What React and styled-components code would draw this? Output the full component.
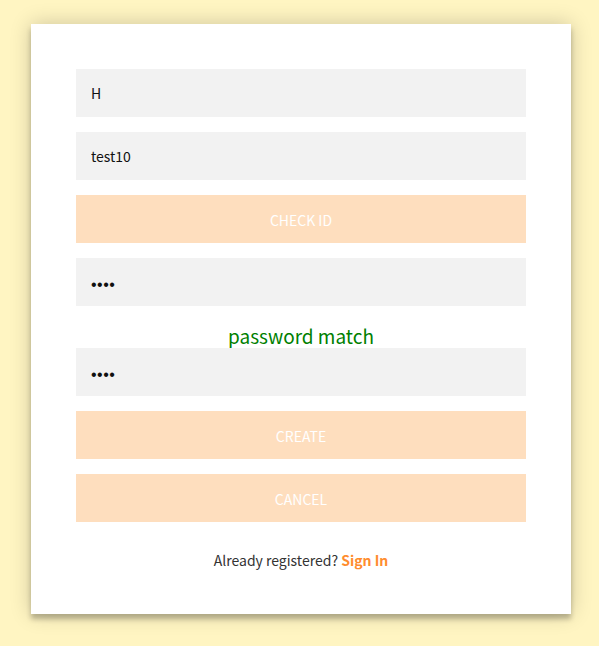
import React from "react";
import styled, { createGlobalStyle } from "styled-components";

const GlobalStyle = createGlobalStyle`
  html, body {
    margin: 0;
    padding: 0;
    background: #fff5c2;
  }
  body {
    font-family: "Noto Sans CJK KR", "Noto Sans", sans-serif;
  }
`;

const App = () => {
  return (
    <Page>
      <GlobalStyle />
      <Form>
        <Input type="text" defaultValue="H" />
        <Input type="text" defaultValue="test10" />
        <Button>check id</Button>
        <Input type="password" defaultValue="1234" />
        <Match>password match</Match>
        <Input type="password" defaultValue="1234" />
        <Button>create</Button>
        <Button>cancel</Button>
        <Message>
          Already registered? <SignIn href="#">Sign In</SignIn>
        </Message>
      </Form>
    </Page>
  );
};

export default App;

const Page = styled.div`
  padding: 24px 0 32px 31px;
`;

const Form = styled.div`
  width: 450px;
  padding: 45px;
  background: #ffffff;
  box-shadow: 0 0 20px 0 rgba(0, 0, 0, 0.2), 0 5px 5px 0 rgba(0, 0, 0, 0.24);
  display: flex;
  flex-direction: column;
`;

const Input = styled.input`
  display: block;
  box-sizing: border-box;
  width: 100%;
  height: 48px;
  margin: 0 0 15px;
  padding: 15px;
  border: 0;
  outline: 0;
  background: #f2f2f2;
  color: #111;
  font-family: "Noto Sans CJK KR", "Noto Sans", sans-serif;
  font-size: 14px;

  &[type="password"] {
    padding: 18px 15px 12px;
    font-family: "Liberation Sans", sans-serif;
    font-size: 16px;
    letter-spacing: 0.5px;
  }
`;

const Button = styled.button`
  box-sizing: border-box;
  width: 100%;
  height: 48px;
  margin: 0 0 15px;
  padding: 15px;
  border: 0;
  outline: 0;
  background: #fedebe;
  color: #ffffff;
  text-transform: uppercase;
  font-family: "Noto Sans CJK KR", "Noto Sans", sans-serif;
  font-size: 14px;
  cursor: pointer;
`;

const Match = styled.div`
  height: 27px;
  line-height: 27px;
  margin-top: 1px;
  margin-bottom: -1px;
  text-align: center;
  color: #008000;
  font-size: 19px;
  white-space: nowrap;
`;

const Message = styled.p`
  margin: 15px 0 0;
  line-height: 17px;
  text-align: center;
  color: #333333;
  font-size: 14px;
`;

const SignIn = styled.a`
  color: #ff8c2e;
  font-weight: 700;
  text-decoration: none;
`;
